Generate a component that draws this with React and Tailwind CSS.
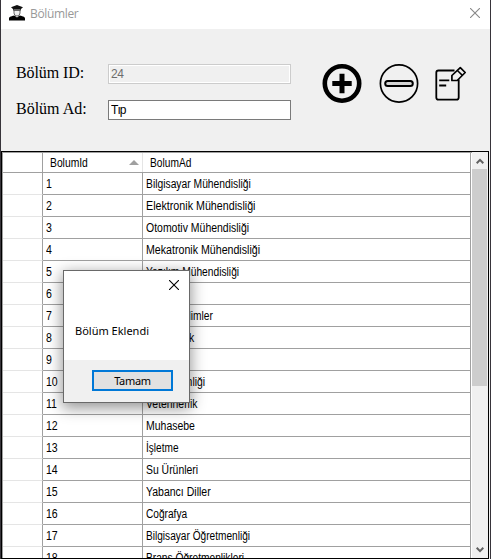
const rows = [
  ["1", "Bilgisayar Mühendisliği", "scale-x-[0.859]"],
  ["2", "Elektronik Mühendisliği", "scale-x-[0.892]"],
  ["3", "Otomotiv Mühendisliği", "scale-x-[0.873]"],
  ["4", "Mekatronik Mühendisliği", "scale-x-[0.886]"],
  ["5", "Yazılım Mühendisliği", "scale-x-[0.853]"],
  ["6", "Fizik", "scale-x-[0.87]"],
  ["7", "Sosyal Bilimler", "scale-x-[0.85]"],
  ["8", "Matematik", "scale-x-[0.87]"],
  ["9", "Kimya", "scale-x-[0.87]"],
  ["10", "Öğretmenliği", "scale-x-[0.87]"],
  ["11", "Veterinerlik", "scale-x-[0.866]"],
  ["12", "Muhasebe", "scale-x-[0.873]"],
  ["13", "İşletme", "scale-x-[0.84]"],
  ["14", "Su Ürünleri", "scale-x-[0.867]"],
  ["15", "Yabancı Diller", "scale-x-[0.876]"],
  ["16", "Coğrafya", "scale-x-[0.845]"],
  ["17", "Bilgisayar Öğretmenliği", "scale-x-[0.843]"],
  ["18", "Branş Öğretmenlikleri", "scale-x-[0.85]"],
];

function Graduate() {
  return (
    <svg width="16" height="16" viewBox="0 0 16 16" className="shrink-0">
      <path d="M8 0 14 2.3 12 4v1.6H4V4L2 2.3Z" fill="#111" />
      <path d="M5 5.5h6v2.2C11 9.5 9.7 11 8 11S5 9.5 5 7.7Z" fill="#eee" stroke="#222" strokeWidth=".7" />
      <path d="M4.5 4.8h7" stroke="#bbb" strokeWidth=".7" />
      <path d="M0 15.5v-2.1c0-1.3 1.3-1.9 5.4-2.9L8 12.4l2.6-1.9c4.1 1 5.4 1.6 5.4 2.9v2.1Z" fill="#000" />
    </svg>
  );
}

function Cross({ size, color }) {
  return (
    <svg width={size} height={size} viewBox="0 0 10 10" stroke={color} strokeWidth="1.1" className="shrink-0">
      <path d="M0 0 10 10M10 0 0 10" />
    </svg>
  );
}

function Toolbar() {
  return (
    <div className="flex items-start">
      <svg width="40" height="40" viewBox="0 0 40 40" fill="none" stroke="#000">
        <circle cx="20" cy="19.5" r="17.2" strokeWidth="4.6" />
        <path d="M10.3 19.5h19.4M20 9.8v19.4" strokeWidth="5" />
      </svg>
      <svg width="40" height="40" viewBox="0 0 40 40" fill="none" stroke="#000" className="ml-[17px]">
        <circle cx="20" cy="19.5" r="18.6" strokeWidth="1.7" />
        <rect x="6.2" y="17" width="27.6" height="5" rx="2.5" fill="#d5d5d5" strokeWidth="2" />
      </svg>
      <svg width="34" height="40" viewBox="0 0 34 40" fill="none" stroke="#000" strokeWidth="1.8" className="ml-[15px]" strokeLinejoin="round">
        <path d="M20.5 6.5H4.5Q2.3 6.5 2.3 8.7v24.8q0 2.2 2.2 2.2h18q2.2 0 2.2-2.2V15.5" />
        <path d="M26.3 3.6 31.2 8.5 23.2 16.5h-5.3v-5Z" strokeWidth="1.7" />
        <path d="M23.4 6.5 28.4 11.4" strokeWidth="1.5" />
        <path d="M5.2 16.4H15.3M5.2 21.5H12.2" />
      </svg>
    </div>
  );
}

function Arrow({ down }) {
  return (
    <div className="flex h-[17px] w-4 shrink-0 items-center justify-center">
      <svg width="8" height="6" viewBox="0 0 8 6" fill="none" stroke="#606060" strokeWidth="2">
        <path d={down ? "M.7 .8 4 4.1 7.3 .8" : "M.7 5.2 4 1.9 7.3 5.2"} />
      </svg>
    </div>
  );
}

function Dialog() {
  return (
    <div className="absolute left-[62px] top-[270px] flex h-[133px] w-[127px] flex-col border border-[#696969] bg-white font-['Noto_Sans',sans-serif] text-[11px] text-black shadow-[0_4px_14px_1px_rgba(0,0,0,0.42)]">
      <div className="flex h-7 items-center justify-end pr-[10px]">
        <Cross size={10} color="#000" />
      </div>
      <div className="flex-1 whitespace-nowrap pl-[11px] pt-[24px] leading-4">Bölüm Eklendi</div>
      <div className="flex h-[42px] items-start bg-[#f0f0f0] pl-7 pt-[10px]">
        <button className="h-[21px] w-[81px] border-2 border-[#0078d7] bg-[#e1e1e1] leading-[17px] tracking-[-0.3px]">Tamam</button>
      </div>
    </div>
  );
}

export default function App() {
  return (
    <div className="relative flex h-[559px] w-[491px] flex-col overflow-hidden border-x border-[#37343a] bg-[#f0f0f0] font-['Liberation_Sans',sans-serif] text-[12px] text-black">
      <header className="flex h-[29px] shrink-0 items-center bg-white pb-[3px] pl-2 pr-[10px]">
        <Graduate />
        <span className="ml-[5px] flex-1 pt-[2px] font-['Open_Sans',sans-serif] text-[12px] leading-4 tracking-[-0.35px] text-[#999]">Bölümler</span>
        <Cross size={10} color="#888" />
      </header>

      <section className="flex h-[122px] shrink-0 items-start pl-[15px] pt-[35px]">
        <div className="flex flex-col gap-4">
          <label className="flex h-5 items-center">
            <span className="w-[92px] whitespace-nowrap pb-[2px] font-['Liberation_Serif',serif] text-[16px] tracking-[-0.1px]">Bölüm ID:</span>
            <input readOnly disabled value="24" className="h-5 w-[183px] border border-[#ccc] bg-[#f0f0f0] px-[2px] text-[12px] tracking-[-0.4px] text-[#6d6d6d] shadow-[inset_0_0_0_1px_white]" />
          </label>
          <label className="flex h-5 items-center">
            <span className="w-[92px] whitespace-nowrap pb-[2px] font-['Liberation_Serif',serif] text-[16px]">Bölüm Ad:</span>
            <input readOnly value="Tıp" className="h-5 w-[183px] border border-[#7a7a7a] bg-white px-[2px] text-[12px] tracking-[-0.9px]" />
          </label>
        </div>
        <div className="ml-[31px]"><Toolbar /></div>
      </section>

      <section className="flex h-[408px] w-[488px] shrink-0 border border-black bg-white">
        <div className="flex min-w-0 flex-1 flex-col overflow-hidden border-l border-t border-[#a0a0a0]">
          <div className="flex h-5 w-[468px] shrink-0 border-b border-r border-[#a0a0a0]">
            <div className="w-10 border-r border-[#a0a0a0]" />
            <div className="flex w-[100px] items-center justify-between border-r border-[#e5e5e5] pl-[7px] pr-[3px]">
              <span className="origin-left scale-x-[0.86] pt-px">BolumId</span>
              <svg width="10" height="5" viewBox="0 0 10 5"><path d="M5 0 10 5H0Z" fill="#a0a0a0" /></svg>
            </div>
            <div className="flex items-center pl-[7px]">
              <span className="origin-left scale-x-[0.85] pt-px">BolumAd</span>
            </div>
          </div>
          {rows.map(([id, name, fit]) => (
            <div key={id} className="flex h-[22px] w-[468px] shrink-0">
              <div className="w-10 border-b border-r border-b-[#e5e5e5] border-r-[#a0a0a0]" />
              <div className="flex w-[100px] items-center border-b border-r border-[#a0a0a0] pl-[3px]">
                <span className="origin-left scale-x-[0.88] pt-px">{id}</span>
              </div>
              <div className="flex flex-1 items-center whitespace-nowrap border-b border-r border-[#a0a0a0] pl-[3px]">
                <span className={`origin-left pt-px ${fit}`}>{name}</span>
              </div>
            </div>
          ))}
        </div>
        <div className="flex w-4 shrink-0 flex-col bg-[#f0f0f0]">
          <Arrow />
          <div className="h-[217px] w-[15px] bg-[#cdcdcd]" />
          <div className="flex-1" />
          <Arrow down />
        </div>
      </section>

      <Dialog />
    </div>
  );
}
